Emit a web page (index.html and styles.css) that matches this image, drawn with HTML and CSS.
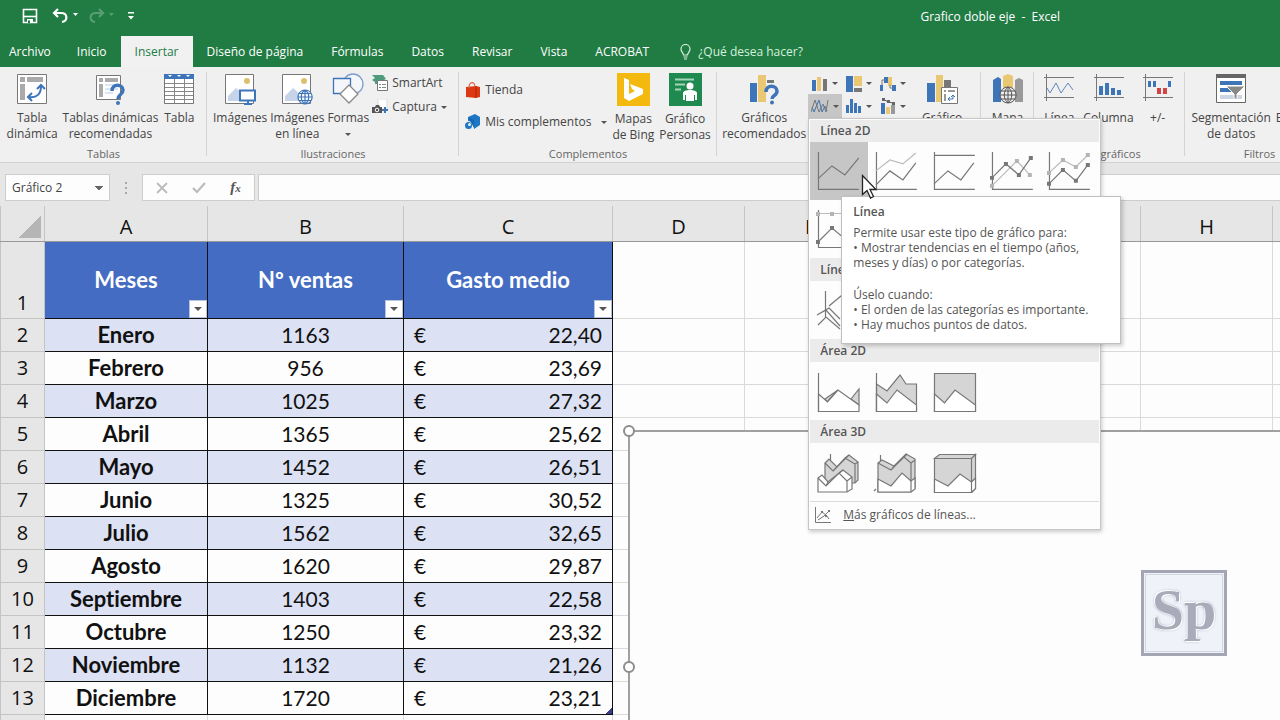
FILE: index.html
```html
<!DOCTYPE html>
<html lang="es">
<head>
    <meta charset="UTF-8">
    <meta name="viewport" content="width=device-width, initial-scale=1.0">
    <title>Grafico doble eje - Excel</title>
    <link rel="stylesheet" href="styles.css">
</head>
<body>
    <header class="title-bar">
        <div class="quick-access">
            <button class="qa-button" aria-label="Guardar">
                <svg width="16" height="16" viewBox="0 0 16 16" fill="none" stroke="#fff" stroke-width="1.6"><path d="M1.500 1.500h13v13h-13z"/><path d="M2 8.500h12"/><path d="M5 11h6v4H5z" fill="#fff" stroke="none"/><path d="M6 12.500h2V15H6z" fill="#217c44" stroke="none"/></svg>
            </button>
            <button class="qa-button" aria-label="Deshacer">
                <svg width="28" height="16" viewBox="0 0 28 16" fill="none" stroke="#fff" stroke-width="2.2"><path d="M6 1L2 5l4 4M2 5h7c7 0 7 8 1 9"/><path d="M21 5h5l-2.500 3z" fill="#fff" stroke="none"/></svg>
            </button>
            <button class="qa-button faded" aria-label="Rehacer">
                <svg width="28" height="16" viewBox="0 0 28 16" fill="none" stroke="#fff" stroke-width="2.2"><path d="M11 1l4 4-4 4M15 5H8c-7 0-7 8-1 9"/><path d="M21 5h5l-2.500 3z" fill="#fff" stroke="none"/></svg>
            </button>
            <button class="qa-button" aria-label="Personalizar">
                <svg width="8" height="10" viewBox="0 0 8 10"><path d="M1 1h6v1.500H1zM1 5h6L4 8.500z" fill="#fff"/></svg>
            </button>
        </div>
        <h1>Grafico doble eje &nbsp;-&nbsp; Excel</h1>
    </header>

    <nav class="tabs">
        <button class="tab tab-file">Archivo</button>
        <button class="tab">Inicio</button>
        <button class="tab active">Insertar</button>
        <button class="tab">Diseño de página</button>
        <button class="tab">Fórmulas</button>
        <button class="tab">Datos</button>
        <button class="tab">Revisar</button>
        <button class="tab">Vista</button>
        <button class="tab">ACROBAT</button>
        <label class="tell-me">
            <svg width="11" height="16" viewBox="0 0 11 16" fill="none" stroke="#d5f0dc" stroke-width="1.2"><path d="M3.500 11C3.500 9 1 8 1 5a4.500 4.500 0 0 1 9 0c0 3-2.500 4-2.500 6zM3.500 13h4M4 15h3"/></svg>
            <input type="text" placeholder="¿Qué desea hacer?" aria-label="¿Qué desea hacer?">
        </label>
    </nav>

    <section class="ribbon">
        <div class="group group-tables">
            <div class="group-body">
                <button class="big">
                    <svg width="32" height="32" viewBox="0 0 32 32"><path d="M1.500 1.500h29v29h-29z" fill="#fff" stroke="#777"/><path d="M4 4h5v5H4zM11 4h16v5H11zM4 11h5v16H4z" fill="#aaa"/><path d="M13 24c8 1 12-3 12-11M16 20l-4 4 4 4M21 16l4-4 4 4" fill="none" stroke="#3e74b8" stroke-width="2"/></svg>
                    <span>Tabla<br>dinámica</span>
                </button>
                <button class="big">
                    <svg width="32" height="32" viewBox="0 0 32 32"><path d="M2.500 2.500h24v24h-24z" fill="#fff" stroke="#777"/><path d="M5 5h4v4H5zM11 5h13v4H11zM5 11h4v13H5z" fill="#aaa"/><path d="M11 12h13M11 16h13M11 20h8" stroke="#b9cee6"/><path d="M18 18c0-8 11-7 11-1 0 5-5 4-5 9" fill="none" stroke="#3e74b8" stroke-width="3.5"/><circle cx="24" cy="30" r="2" fill="#3e74b8"/></svg>
                    <span>Tablas dinámicas<br>recomendadas</span>
                </button>
                <button class="big">
                    <svg width="32" height="32" viewBox="0 0 32 32"><path d="M1.500 1.500h29v29h-29z" fill="#fff" stroke="#777"/><path d="M1 1h30v5H1z" fill="#3e74b8"/><path d="M5 2h4L7 4zM14 2h4l-2 2zM23 2h4l-2 2z" fill="#fff"/><path d="M2 10.500h28M2 14.500h28M2 18.500h28M2 22.500h28M2 26.500h28M11.500 6v24M21.500 6v24" stroke="#888"/></svg>
                    <span>Tabla</span>
                </button>
            </div>
            <div class="group-name">Tablas</div>
        </div>

        <div class="group group-pictures">
            <div class="group-body">
                <button class="big">
                    <svg width="32" height="32" viewBox="0 0 32 32"><path d="M1.500 1.500h28v29h-28z" fill="#fff" stroke="#777"/><circle cx="23" cy="8" r="3" fill="#dcc070"/><path d="M4 28v-5l8-8 8 7v6z" fill="#c7d3e8"/><path d="M16 17.500h15v10H16z" fill="#fff" stroke="#3e74b8" stroke-width="2"/><path d="M20 31h8M24 28v3" stroke="#3e74b8" stroke-width="2"/></svg>
                    <span>Imágenes</span>
                </button>
                <button class="big">
                    <svg width="32" height="32" viewBox="0 0 32 32"><path d="M1.500 1.500h28v29h-28z" fill="#fff" stroke="#777"/><circle cx="23" cy="8" r="3" fill="#dcc070"/><path d="M4 28v-5l8-8 8 7v6z" fill="#c7d3e8"/><circle cx="24" cy="24" r="7" fill="#fff"/><path d="M24 17a7 7 0 1 0 .1 0zM24 17c-5 3-5 11 0 14 5-3 5-11 0-14zM17 24h14M18 20.500h12M18 27.500h12M24 17v14" fill="none" stroke="#3e74b8" stroke-width="1.2"/></svg>
                    <span>Imágenes<br>en línea</span>
                </button>
                <button class="big">
                    <svg width="32" height="32" viewBox="0 0 32 32" fill="#f4f6fa" stroke-width="1.3"><circle cx="21" cy="11" r="10" stroke="#7d9fce"/><path d="M1.500 5.500h17v15h-17z" stroke="#3e74b8"/><path d="M17 12l9 9-9 9-9-9z" fill="#fff" stroke="#888"/></svg>
                    <span>Formas<br><i class="arrow"></i></span>
                </button>
                <div class="stack">
                    <button class="small">
                        <svg width="16" height="16" viewBox="0 0 16 16"><path d="M0 0h11l3 4-2 1H6v4H3V7L0 5l3-2z" fill="#4f9c7c"/><path d="M5.500 5.500h10v10h-10z" fill="#fff" stroke="#777"/><path d="M7 9.500h2M10 9.500h4M7 12.500h2M10 12.500h4" stroke="#888"/></svg>
                        SmartArt
                    </button>
                    <button class="small">
                        <svg width="16" height="16" viewBox="0 0 16 16"><path d="M6 0h9v10H6z" fill="#fff" stroke="#ddd"/><path d="M0 8h3l1-2h3l1 2h2v6H0z" fill="#555"/><circle cx="5" cy="11" r="1.8" fill="none" stroke="#fff"/><path d="M13 8v6M10 11h6" stroke="#3e74b8" stroke-width="2"/></svg>
                        Captura<i class="arrow"></i>
                    </button>
                </div>
            </div>
            <div class="group-name">Ilustraciones</div>
        </div>

        <div class="group group-addins">
            <div class="group-body">
                <div class="stack stack-loose">
                    <button class="small">
                        <svg width="16" height="16" viewBox="0 0 16 16"><path d="M1 5l10-1 4 1v10l-4 1-10-1z" fill="#dc3912"/><path d="M4 6c0-7 6-7 6-1" fill="none" stroke="#e0644a" stroke-width="1.2"/><path d="M11 4v12" stroke="#a92605"/></svg>
                        Tienda
                    </button>
                    <button class="small">
                        <svg width="16" height="16" viewBox="0 0 16 16"><path d="M3 3l7-3 5 3v8l-6 4V8L3 7z" fill="#1d77c4"/><path d="M3 3l6 3v8" fill="#1468b3"/><circle cx="3.500" cy="11.500" r="3.500" fill="#1d77c4"/><circle cx="4.500" cy="10.500" r="1.500" fill="#eee"/></svg>
                        Mis complementos<i class="arrow arrow-far"></i>
                    </button>
                </div>
                <button class="big">
                    <svg width="33" height="33" viewBox="0 0 33 33"><path d="M0 0h33v33H0z" fill="#f3b90f"/><path d="M7 5l5 2v14l6-3-3-2-2-5 13 5v5l-14 7-5-3z" fill="#fff"/></svg>
                    <span>Mapas<br>de Bing</span>
                </button>
                <button class="big">
                    <svg width="33" height="33" viewBox="0 0 33 33"><path d="M0 0h33v33H0z" fill="#1f8a50"/><path d="M6 6.500h19M6 11.500h10M6 16.500h6" stroke="#a4d4b8" stroke-width="2"/><circle cx="21" cy="13" r="3.500" fill="#fff"/><path d="M14 27v-7c0-4 14-4 14 0v7h-2v-5h-1v6h-8v-6h-1v5z" fill="#fff"/></svg>
                    <span>Gráfico<br>Personas</span>
                </button>
            </div>
            <div class="group-name">Complementos</div>
        </div>

        <div class="group group-charts">
            <div class="group-body">
                <button class="big">
                    <svg width="32" height="32" viewBox="0 0 32 32"><path d="M2 10h7v19H2z" fill="#3e74b8"/><path d="M10 2h8v27h-8z" fill="#eac773"/><path d="M19 7h7v3h-7z" fill="#777"/><path d="M18 19c0-8 11-7 11-1 0 5-5 4-5 8" fill="none" stroke="#3e74b8" stroke-width="3.5"/><circle cx="24" cy="29.500" r="2" fill="#3e74b8"/></svg>
                    <span>Gráficos<br>recomendados</span>
                </button>
                <div class="chart-types">
                    <button class="chart-type" aria-label="Columnas">
                        <svg width="16" height="16" viewBox="0 0 16 16"><path d="M0 4h4v11H0z" fill="#3e74b8"/><path d="M5 1h4v14H5z" fill="#eac773"/><path d="M11 3h4v12h-4z" fill="#777"/></svg><i class="arrow"></i>
                    </button>
                    <button class="chart-type" aria-label="Jerarquía">
                        <svg width="16" height="16" viewBox="0 0 16 16"><path d="M0 0h7v16H0z" fill="#3e74b8"/><path d="M8 0h8v10H8z" fill="#eac773"/><path d="M8 12h8v4H8z" fill="#777"/></svg><i class="arrow"></i>
                    </button>
                    <button class="chart-type" aria-label="Cascada">
                        <svg width="16" height="16" viewBox="0 0 16 16"><path d="M0 9h3v6H0zM4 1h4v6H4z" fill="#3e74b8"/><path d="M8 1h4v9H8z" fill="#eac773"/><path d="M12 9h4v6h-4z" fill="#3e74b8"/><path d="M2 9V4h3M10 9v3h3" fill="none" stroke="#777"/></svg><i class="arrow"></i>
                    </button>
                    <div class="menu-anchor">
                        <button class="chart-type open" aria-label="Líneas">
                            <svg width="18" height="16" viewBox="0 0 18 16" fill="none"><path d="M1 9l2 5 5-12 3 12 3-6 2 5" stroke="#3e74b8"/><path d="M0 14L4 2l4 12 4-8 3 8 2-12" stroke="#777"/></svg><i class="arrow"></i>
                        </button>
                        <div class="menu">
                            <h2>Línea 2D</h2>
                            <div class="menu-row">
                                <button class="choice selected" aria-label="Línea">
                                    <svg viewBox="0 0 58 58"><path class="axis" d="M8.500 10v37.500H49"/><path class="line" d="M8 37l14-13 13 9 14-17"/></svg>
                                </button>
                                <button class="choice" aria-label="Línea apilada">
                                    <svg viewBox="0 0 58 58"><path class="axis" d="M8.500 10v37.500H49"/><path class="pale" d="M8 29l14-11 13 4 13-11"/><path class="line" d="M8 43l14-14 13 9 13-17"/></svg>
                                </button>
                                <button class="choice" aria-label="Línea 100% apilada">
                                    <svg viewBox="0 0 58 58"><path class="axis" d="M8.500 10v37.500H49"/><path class="line" d="M8 13.500h41M8 42l14-13 13 9 13-17"/></svg>
                                </button>
                                <button class="choice" aria-label="Línea con marcadores">
                                    <svg viewBox="0 0 58 58"><path class="axis" d="M8.500 10v37.500H49"/><path class="pale" d="M8 44l25-25 13 14"/><path class="pale-dot" d="M6 42h4v4H6zM31 17h4v4h-4zM44 31h4v4h-4z"/><path class="line" d="M8 36l14-14 13 11 12-17"/><path class="dot" d="M6 34h4v4H6zM20 20h4v4h-4zM33 31h4v4h-4zM45 14h4v4h-4z"/></svg>
                                </button>
                                <button class="choice" aria-label="Línea apilada con marcadores">
                                    <svg viewBox="0 0 58 58"><path class="axis" d="M8.500 10v37.500H49"/><path class="pale" d="M8 31l14-13 13 7 12-12"/><path class="pale-dot" d="M6 29h4v4H6zM20 16h4v4h-4zM33 23h4v4h-4zM45 11h4v4h-4z"/><path class="line" d="M8 42l14-14 13 11 12-16"/><path class="dot" d="M6 40h4v4H6zM20 26h4v4h-4zM33 37h4v4h-4zM45 21h4v4h-4z"/></svg>
                                </button>
                            </div>
                            <div class="menu-row">
                                <button class="choice" aria-label="Línea 100% apilada con marcadores">
                                    <svg viewBox="0 0 58 58"><path class="axis" d="M8.500 10v37.500H49"/><path class="pale" d="M8 13.500h40"/><path class="pale-dot" d="M6 12h4v4H6zM20 12h4v4h-4z"/><path class="line" d="M8 42l14-14 13 11 12-16"/><path class="dot" d="M6 40h4v4H6zM20 26h4v4h-4z"/></svg>
                                </button>
                            </div>
                            <h2>Línea 3D</h2>
                            <div class="menu-row">
                                <button class="choice" aria-label="Línea 3D">
                                    <svg viewBox="0 0 58 58"><path class="axis" d="M15.500 10v26M8 44l8-8 14 12"/><path class="line" d="M7 34l12-7 11 11M19 25l12-10 14 4M7 34l9-5 14 16"/></svg>
                                </button>
                            </div>
                            <h2>Área 2D</h2>
                            <div class="menu-row">
                                <button class="choice" aria-label="Área">
                                    <svg viewBox="0 0 58 58"><path class="area" d="M15 37l13-9-11 12zM41 37l8-10v16z"/><path class="face" d="M8.500 32l9 8L28 28l21 15v6.500H8.500z"/><path class="axis" d="M8.500 11v38.500H49"/></svg>
                                </button>
                                <button class="choice" aria-label="Área apilada">
                                    <svg viewBox="0 0 58 58"><path class="area" d="M8.500 22L19 29l13-16 6 9h10.500v27h-40z"/><path class="face" d="M8.500 32L19 41l10-13 19.500 15v6.500h-40z"/><path class="axis" d="M8.500 11v38.500H49"/></svg>
                                </button>
                                <button class="choice" aria-label="Área 100% apilada">
                                    <svg viewBox="0 0 58 58"><path class="area" d="M8.500 11.500h41v38h-41z"/><path class="face" d="M8.500 32l10 9L29 28l20.500 15v6.500h-41z"/></svg>
                                </button>
                            </div>
                            <h2>Área 3D</h2>
                            <div class="menu-row">
                                <button class="choice" aria-label="Área 3D">
                                    <svg viewBox="0 0 58 58"><path class="axis" d="M20.500 11v8"/><path class="area" d="M15 20l4-4 8 8 12-12 9 7v18l-3 3H15z"/><path class="axis" d="M15 20l8 8 12-13 10 6v19M23 28l4-4M35 15l4-3M45 21l3-2"/><path class="face" d="M8 35l4-3 6 7 15-12 9 7v12l-5 3H8z"/><path class="axis" d="M8 35l8 8 13-13 8 8v11M16 43l2-4M29 30l4-3M37 38l5-4"/></svg>
                                </button>
                                <button class="choice" aria-label="Área 3D apilada">
                                    <svg viewBox="0 0 58 58"><path class="axis" d="M12.500 12v8M8 46l-2 2"/><path class="area" d="M10 20l4-3 12 6 12-12 9 5v29l-4 4H10z"/><path class="axis" d="M10 20l13 7 13-13 7 6v29M23 27l3-4M36 14l3-3M43 20l4-3"/><path class="face" d="M10 36l13 7 11-13 9 8 4-3v11l-4 3H10z"/><path class="axis" d="M43 38v11"/></svg>
                                </button>
                                <button class="choice" aria-label="Área 3D 100% apilada">
                                    <svg viewBox="0 0 58 58"><path class="area" d="M8.500 15.500l5-4h36l-4 4zM8.500 15.500h37v34h-37zM45.500 15.500l4-4v34l-4 4"/><path class="face" d="M8.500 36L22 43l12-12 11.500 8v10.500h-37zM45.500 39l4-4v10.500l-4 4"/></svg>
                                </button>
                            </div>
                            <button class="menu-more">
                                <svg width="18" height="18" viewBox="0 0 18 18" fill="none" stroke="#777"><path d="M1.500 1v15.500H17"/><path d="M3 12l5-6 4 3 3 4M4 14l6-4 5-5" /><path d="M7 5h2v2H7zM11 9h2v2h-2zM14 4h2v2h-2z" fill="#777" stroke="none"/></svg>
                                <span><u>M</u>ás gráficos de líneas...</span>
                            </button>
                            <div class="tooltip" role="tooltip">
                                <h3>Línea</h3>
                                <p>Permite usar este tipo de gráfico para:<br>
                                • Mostrar tendencias en el tiempo (años,<br>
                                meses y días) o por categorías.</p>
                                <p>Úselo cuando:<br>
                                • El orden de las categorías es importante.<br>
                                • Hay muchos puntos de datos.</p>
                            </div>
                            <svg class="pointer" width="17" height="25" viewBox="0 0 17 25"><path d="M1.500 1.500v19l4.500-4 3.500 7.500 3-1.500-3.500-7h6z" fill="#fff" stroke="#222" stroke-width="1.3"/></svg>
                        </div>
                    </div>
                    <button class="chart-type" aria-label="Estadístico">
                        <svg width="16" height="16" viewBox="0 0 16 16"><path d="M0 7h3v8H0zM4 1h3v14H4zM8 5h3v10H8zM12 8h3v7h-3z" fill="#3e74b8"/></svg><i class="arrow"></i>
                    </button>
                    <button class="chart-type" aria-label="Combinado">
                        <svg width="16" height="16" viewBox="0 0 16 16"><path d="M1 5h4v11H1z" fill="#3e74b8"/><path d="M6 9h4v7H6z" fill="#eac773"/><path d="M11 7h4v9h-4z" fill="#999"/><path d="M3 1l5 3 5 1" fill="none" stroke="#555"/><path d="M2 0h3v3H2zM7 2h3v3H7zM12 4h3v3h-3z" fill="#666"/></svg><i class="arrow"></i>
                    </button>
                </div>
                <button class="big">
                    <svg width="32" height="32" viewBox="0 0 32 32"><path d="M1 10h8v19H1z" fill="#3e74b8"/><path d="M10 2h7v27h-7z" fill="#eac773"/><path d="M18 7h7v7h-7z" fill="#777"/><path d="M15.500 14.500h16v16h-16z" fill="#fff" stroke="#777"/><path d="M18 17h2v2h-2zM22 17h7v2h-7zM18 21h2v7h-2z" fill="#999"/><path d="M22 26h5v-4M24 24l-2 2 2 2M25 24l2-2 2 2" fill="none" stroke="#3e74b8"/></svg>
                    <span>Gráfico<br>dinámico</span>
                </button>
            </div>
            <div class="group-name">Gráficos</div>
        </div>

        <div class="group group-map">
            <div class="group-body">
                <button class="big">
                    <svg width="32" height="32" viewBox="0 0 32 32"><path d="M1 7l5-3 3 2v23H1z" fill="#3e74b8"/><path d="M11 3l5-2 5 2v20H11z" fill="#eac773"/><path d="M23 7l4-2 4 2v22h-8z" fill="#999"/><circle cx="16" cy="22" r="8" fill="#eee"/><path d="M16 14a8 8 0 1 0 .1 0zM16 14c-5 4-5 12 0 16 5-4 5-12 0-16zM8 22h16M9 18h14M9 26h14M16 14v16" fill="none" stroke="#555"/></svg>
                    <span>Mapa<br>3D</span>
                </button>
            </div>
            <div class="group-name">Paseos</div>
        </div>

        <div class="group group-sparklines">
            <div class="group-body">
                <button class="big">
                    <svg width="32" height="32" viewBox="0 0 32 32" fill="none" stroke="#777"><path d="M3.500 1v27M1 4.500h30M1 24.500h30"/><path d="M4 15l3 5 6-10 5 10 7-10 5 7" stroke="#5f87bd"/></svg>
                    <span>Línea</span>
                </button>
                <button class="big">
                    <svg width="32" height="32" viewBox="0 0 32 32"><path d="M3.500 1v27M1 4.500h30M1 24.500h30" stroke="#777"/><path d="M6 13h4v9H6zM12 10h4v12h-4zM18 15h4v7h-4zM24 17h4v5h-4z" fill="#3e74b8"/></svg>
                    <span>Columna</span>
                </button>
                <button class="big">
                    <svg width="32" height="32" viewBox="0 0 32 32"><path d="M3.500 1v27M1 4.500h30M1 24.500h30" stroke="#777"/><path d="M6 8h3v6H6zM11 8h3v6h-3zM26 8h3v6h-3z" fill="#3e74b8"/><path d="M15 15h4v6h-4zM21 15h4v6h-4z" fill="#d34545"/></svg>
                    <span>+/-</span>
                </button>
            </div>
            <div class="group-name">Minigráficos</div>
        </div>

        <div class="group group-filters">
            <div class="group-body">
                <button class="big">
                    <svg width="32" height="32" viewBox="0 0 32 32"><path d="M1.500 1.500h29v28h-29z" fill="#fff" stroke="#666"/><path d="M1 1h30v4H1z" fill="#666"/><path d="M5 8h22v4H5zM5 15h12v4H5z" fill="#3e74b8"/><path d="M5 22h22v4H5z" fill="#ccd5e2"/><path d="M11 13h19l-8 8v6l-3-2v-4z" fill="#888" stroke="#fff"/></svg>
                    <span>Segmentación<br>de datos</span>
                </button>
                <button class="big">
                    <svg width="32" height="32" viewBox="0 0 32 32"><path d="M8.500 4.500h22v20h-22z" fill="#fff" stroke="#777"/></svg>
                    <span>Escala de<br>tiempo</span>
                </button>
            </div>
            <div class="group-name">Filtros</div>
        </div>
    </section>

    <div class="formula-bar">
        <select class="name-box" aria-label="Cuadro de nombres">
            <option>Gráfico 2</option>
        </select>
        <svg class="grip" width="4" height="14" viewBox="0 0 4 14" fill="#aaa"><path d="M1 1h2v2H1zM1 6h2v2H1zM1 11h2v2H1z"/></svg>
        <div class="formula-buttons">
            <button aria-label="Cancelar"><svg width="12" height="12" viewBox="0 0 12 12" stroke="#bbb" stroke-width="1.8"><path d="M1 1l10 10M11 1L1 11"/></svg></button>
            <button aria-label="Introducir"><svg width="14" height="12" viewBox="0 0 14 12" fill="none" stroke="#bbb" stroke-width="2.2"><path d="M1 6l4 4 8-9"/></svg></button>
            <button class="fx" aria-label="Insertar función">f<small>x</small></button>
        </div>
        <input class="formula-input" type="text" aria-label="Barra de fórmulas">
    </div>

    <main class="sheet">
        <table class="grid">
            <colgroup>
                <col class="col-number">
                <col class="col-a">
                <col class="col-b">
                <col class="col-c">
                <col class="col-rest" span="6">
            </colgroup>
            <thead>
                <tr><th class="corner"></th><th>A</th><th>B</th><th>C</th><th>D</th><th>E</th><th>F</th><th>G</th><th>H</th><th>I</th></tr>
            </thead>
            <tbody>
                <tr class="heading">
                    <th>1</th>
                    <td>Meses<button class="filter" aria-label="Filtrar Meses"><i class="arrow"></i></button></td>
                    <td>Nº ventas<button class="filter" aria-label="Filtrar Nº ventas"><i class="arrow"></i></button></td>
                    <td>Gasto medio<button class="filter" aria-label="Filtrar Gasto medio"><i class="arrow"></i></button></td>
                    <td></td><td></td><td></td><td></td><td></td><td></td>
                </tr>
                <tr><th>2</th><td>Enero</td><td>1163</td><td><div class="money"><span>€</span><span>22,40</span></div></td><td></td><td></td><td></td><td></td><td></td><td></td></tr>
                <tr><th>3</th><td>Febrero</td><td>956</td><td><div class="money"><span>€</span><span>23,69</span></div></td><td></td><td></td><td></td><td></td><td></td><td></td></tr>
                <tr><th>4</th><td>Marzo</td><td>1025</td><td><div class="money"><span>€</span><span>27,32</span></div></td><td></td><td></td><td></td><td></td><td></td><td></td></tr>
                <tr><th>5</th><td>Abril</td><td>1365</td><td><div class="money"><span>€</span><span>25,62</span></div></td><td></td><td></td><td></td><td></td><td></td><td></td></tr>
                <tr><th>6</th><td>Mayo</td><td>1452</td><td><div class="money"><span>€</span><span>26,51</span></div></td><td></td><td></td><td></td><td></td><td></td><td></td></tr>
                <tr><th>7</th><td>Junio</td><td>1325</td><td><div class="money"><span>€</span><span>30,52</span></div></td><td></td><td></td><td></td><td></td><td></td><td></td></tr>
                <tr><th>8</th><td>Julio</td><td>1562</td><td><div class="money"><span>€</span><span>32,65</span></div></td><td></td><td></td><td></td><td></td><td></td><td></td></tr>
                <tr><th>9</th><td>Agosto</td><td>1620</td><td><div class="money"><span>€</span><span>29,87</span></div></td><td></td><td></td><td></td><td></td><td></td><td></td></tr>
                <tr><th>10</th><td>Septiembre</td><td>1403</td><td><div class="money"><span>€</span><span>22,58</span></div></td><td></td><td></td><td></td><td></td><td></td><td></td></tr>
                <tr><th>11</th><td>Octubre</td><td>1250</td><td><div class="money"><span>€</span><span>23,32</span></div></td><td></td><td></td><td></td><td></td><td></td><td></td></tr>
                <tr><th>12</th><td>Noviembre</td><td>1132</td><td><div class="money"><span>€</span><span>21,26</span></div></td><td></td><td></td><td></td><td></td><td></td><td></td></tr>
                <tr><th>13</th><td>Diciembre</td><td>1720</td><td class="last"><div class="money"><span>€</span><span>23,21</span></div></td><td></td><td></td><td></td><td></td><td></td><td></td></tr>
                <tr class="blank"><th></th><td></td><td></td><td></td><td></td><td></td><td></td><td></td><td></td><td></td></tr>
            </tbody>
        </table>

        <!-- gráfico vacío, flota sobre las celdas -->
        <div class="chart">
            <span class="handle handle-top"></span>
            <span class="handle handle-middle"></span>
        </div>
        <div class="watermark">Sp</div>
    </main>
</body>
</html>
```
FILE: styles.css
```css
* {
    box-sizing: border-box;
}
body {
    margin: 0;
    height: 100vh;
    display: flex;
    flex-direction: column;
    overflow: hidden;
    font-family: "Open Sans", "Noto Sans", sans-serif;
    font-size: 12px;
    color: #444;
    background: #e6e6e6;
}
button,
input,
select {
    font: inherit;
    color: inherit;
    border: 0;
    padding: 0;
    margin: 0;
    background: none;
}
svg {
    display: block;
    flex: none;
}
.arrow {
    display: inline-block;
    border: 3px solid transparent;
    border-top-color: #555;
    border-bottom: 0;
    vertical-align: middle;
}

/* Title bar */
.title-bar {
    display: flex;
    align-items: center;
    justify-content: space-between;
    height: 36px;
    flex: none;
    padding: 0 220px 4px 22px;
    background: #217c44;
    color: #fff;
}
.title-bar h1 {
    margin: 0;
    font-size: 12px;
    font-weight: normal;
}
.quick-access {
    display: flex;
    align-items: center;
    gap: 8px;
}
.qa-button:first-child {
    padding-right: 6px;
}
.qa-button:last-child {
    padding-left: 3px;
}
.faded {
    opacity: 0.25;
}

/* Tabs */
.tabs {
    display: flex;
    height: 31px;
    flex: none;
    background: #217c44;
    color: #fff;
}
.tab {
    padding: 0 14px;
    white-space: nowrap;
}
.tab-file {
    padding: 0 12px 0 9px;
}
.tab.active {
    background: #f1f1f1;
    color: #217c44;
}
.tell-me {
    display: flex;
    align-items: center;
    gap: 7px;
    padding-left: 17px;
}
.tell-me input::placeholder {
    color: #d5f0dc;
    opacity: 1;
}

/* Ribbon */
.ribbon {
    display: flex;
    height: 96px;
    flex: none;
    background: #f0f0f0;
    border-bottom: 1px solid #d2d2d2;
    line-height: 16px;
}
.group {
    display: flex;
    flex-direction: column;
    flex: none;
    padding: 6px 0 0;
    position: relative;
}
.group::after {
    content: "";
    position: absolute;
    right: 0;
    top: 5px;
    bottom: 6px;
    width: 1px;
    background: #d4d4d4;
}
.group-tables { width: 207px; }
.group-pictures { width: 252px; }
.group-addins { width: 258px; }
.group-charts { width: 264px; }
.group-map { width: 53px; }
.group-sparklines { width: 151px; }
.group-filters { width: 149px; }
.group-body {
    display: flex;
    align-items: flex-start;
    justify-content: center;
    gap: 5px;
    height: 73px;
}
.group-tables .group-body {
    padding-right: 5px;
}
.group-pictures .group-body {
    gap: 3px;
    padding-right: 6px;
}
.group-charts .group-body {
    gap: 2px;
    padding-right: 8px;
}
.group-charts .big:last-child {
    margin-left: 4px;
}
.group-sparklines .group-body {
    gap: 8px;
    padding-right: 2px;
}
.group-name {
    text-align: center;
    font-size: 11px;
    color: #666;
    line-height: 16px;
}
.big {
    display: flex;
    flex-direction: column;
    align-items: center;
    gap: 5px;
    line-height: 16px;
    white-space: nowrap;
}
.stack {
    display: flex;
    flex-direction: column;
    gap: 4px;
}
.stack-loose {
    gap: 12px;
    padding-top: 7px;
}
.small {
    display: flex;
    align-items: center;
    gap: 4px;
    height: 20px;
    white-space: nowrap;
}
.arrow-far {
    margin-left: 6px;
}
.chart-types {
    display: grid;
    grid-template-columns: repeat(3, 34px);
    grid-template-rows: 21px 24px;
}
.chart-type {
    display: flex;
    align-items: center;
    justify-content: center;
    gap: 4px;
    width: 34px;
    height: 100%;
}
.chart-type.open {
    background: #c6c6c6;
}
.menu-anchor {
    position: relative;
}

/* Chart menu */
.menu {
    position: absolute;
    z-index: 5;
    left: 0;
    top: 100%;
    width: 293px;
    padding: 1px;
    background: #fdfdfd;
    border: 1px solid #c6c6c6;
    box-shadow: 1px 2px 4px rgba(0, 0, 0, 0.2);
}
.menu h2 {
    margin: 0;
    padding-left: 10px;
    background: #ebebeb;
    font-size: 12px;
    font-weight: 600;
    line-height: 22px;
    color: #555;
}
.menu .menu-row + h2 {
    line-height: 23px;
}
.menu-row {
    display: flex;
    height: 58px;
}
.choice {
    width: 58px;
    height: 58px;
}
.choice.selected {
    background: #c6c6c6;
}
.choice path {
    fill: none;
    stroke: #777;
    stroke-width: 1.2px;
}
.choice .pale {
    stroke: #bbb;
}
.choice .dot {
    fill: #777;
    stroke: none;
}
.choice .pale-dot {
    fill: #b4b4b4;
    stroke: none;
}
.choice .area {
    fill: #d5d5d5;
}
.choice .face {
    fill: #fff;
}
.menu-more {
    display: flex;
    align-items: center;
    gap: 11px;
    width: 100%;
    height: 27px;
    padding-left: 4px;
    border-top: 1px solid #dcdcdc;
    color: #555;
}
.tooltip {
    position: absolute;
    left: 32px;
    top: 77px;
    width: 280px;
    padding: 7px 11px 11px;
    background: #fff;
    border: 1px solid #c0c0c0;
    box-shadow: 2px 2px 4px rgba(0, 0, 0, 0.2);
    color: #555;
    line-height: 15px;
    white-space: nowrap;
}
.tooltip h3 {
    margin: 0 0 6px;
    font-size: 12px;
    font-weight: 600;
}
.tooltip p {
    margin: 0 0 17px;
}
.tooltip p:last-child {
    margin: 0;
}
.pointer {
    position: absolute;
    left: 52px;
    top: 55px;
}

/* Formula bar */
.formula-bar {
    display: flex;
    align-items: center;
    height: 43px;
    flex: none;
    padding: 6px 0 0 5px;
}
.name-box,
.formula-buttons,
.formula-input {
    height: 27px;
    background: #fdfdfd;
    border: 1px solid #cdcdcd;
}
.name-box {
    width: 105px;
    padding-left: 6px;
    appearance: none;
    background: conic-gradient(from 315deg at 50% 4px, #666 90deg, transparent 0) no-repeat right 6px center / 8px 4px #fdfdfd;
}
.grip {
    margin: 0 14px;
}
.formula-buttons {
    display: flex;
    width: 113px;
    margin-right: 3px;
}
.formula-buttons button {
    flex: 1;
    display: flex;
    align-items: center;
    justify-content: center;
}
.formula-buttons .fx {
    font: italic bold 15px "Liberation Serif", serif;
    color: #555;
}
.fx small {
    font-size: 11px;
}
.formula-input {
    flex: 1;
    border-right: 0;
}

/* Sheet */
.sheet {
    position: relative;
    flex: 1;
    min-height: 0;
    overflow: hidden;
}
.grid {
    width: 1405px;
    table-layout: fixed;
    border-collapse: collapse;
    font-family: Lato, sans-serif;
    font-size: 21px;
    font-variant-ligatures: none;
    color: #111;
    background: #fdfdfd;
}
.col-number { width: 44px; }
.col-a { width: 163px; }
.col-b { width: 196px; }
.col-c { width: 209px; }
.col-rest { width: 132px; }
.grid th,
.grid td {
    height: 33px;
    padding: 0;
    border: 1px solid #dadada;
    text-align: center;
    line-height: 26px;
}
.grid th {
    font-family: "Open Sans", sans-serif;
    font-size: 20px;
    font-weight: normal;
    background: #e6e6e6;
    border-color: #c4c4c4;
}
.grid thead th {
    height: 35px;
    padding-top: 8px;
    border-top: 0;
    border-bottom-color: #999;
}
.grid thead .corner {
    background: linear-gradient(135deg, transparent 50%, #b5b5b5 50%) no-repeat 18px 10px / 22px 22px #e6e6e6;
}
.grid tbody td:nth-child(2),
.grid tbody td:nth-child(3),
.grid tbody td:nth-child(4) {
    border-color: #111;
}
.grid tbody td:nth-child(2) {
    font-size: 22px;
    font-weight: bold;
}
.grid tbody tr:nth-child(even) td:nth-child(-n+4) {
    background: #dce1f3;
}
.grid .heading th {
    height: 77px;
    padding-bottom: 2px;
    vertical-align: bottom;
}
.grid .heading td {
    position: relative;
}
.grid .heading td:nth-child(-n+4) {
    background: #446cc2;
    color: #fff;
    font-size: 22px;
    font-weight: bold;
}
.filter {
    position: absolute;
    right: 0;
    bottom: 0;
    width: 18px;
    height: 18px;
    background: #fff;
    border: 1px solid #b8c4dc;
    line-height: 10px;
}
.filter .arrow {
    border-width: 4px 4px 0;
    vertical-align: top;
    margin-top: 3px;
}
.money {
    display: flex;
    justify-content: space-between;
    padding: 0 10px;
}
.grid .last {
    background: linear-gradient(135deg, transparent 50%, #3c3c8c 50%) no-repeat right bottom / 7px 7px;
}
.grid tbody tr.blank td:nth-child(n) {
    background: #fdfdfd;
    border-color: #111 #dadada #dadada;
}
.grid tbody tr.blank td:nth-child(n+5) {
    border-top-color: #dadada;
}

/* Chart over the cells */
.chart {
    position: absolute;
    left: 628px;
    top: 224px;
    width: 900px;
    height: 474px;
    background: #fdfdfd;
    border: 2px solid #a0a0a0;
}
.handle {
    position: absolute;
    left: -7px;
    width: 12px;
    height: 12px;
    border: 2px solid #8c8c8c;
    border-radius: 50%;
    background: #fff;
}
.handle-top { top: -7px; }
.handle-middle { top: calc(50% - 6px); }
.watermark {
    position: absolute;
    right: 53px;
    top: 364px;
    width: 86px;
    height: 86px;
    border: 3px solid #a3a5b3;
    outline: 1px solid #d3d5e0;
    outline-offset: -5px;
    background: #f0f2fa;
    color: #a9abba;
    font: bold 58px/74px "Liberation Serif", serif;
    text-align: center;
    text-shadow: 1px 1px 0 #fff, -1px -1px 0 #fff, 0 0 3px #777a90;
}
```
